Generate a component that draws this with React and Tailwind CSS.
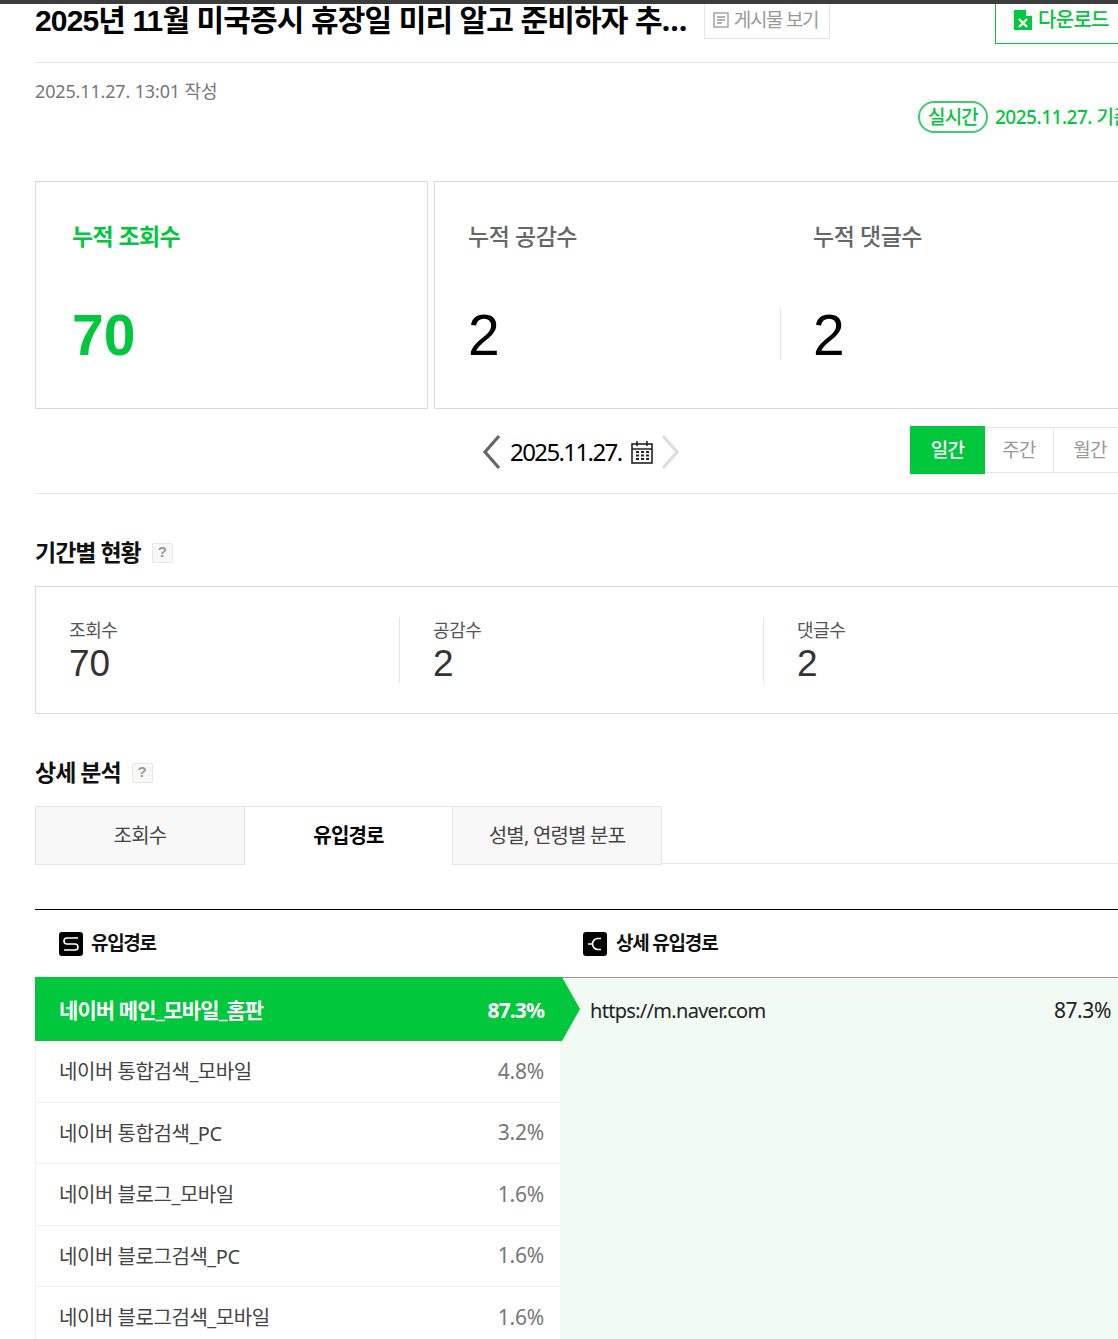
import React from "react";

const sans = "font-['Noto_Sans','Noto_Sans_CJK_KR',sans-serif]";
const arial = "font-['Liberation_Sans','Noto_Sans_CJK_KR',sans-serif]";

const sources = [
  ["네이버 통합검색_모바일", "4.8%"],
  ["네이버 통합검색_PC", "3.2%"],
  ["네이버 블로그_모바일", "1.6%"],
  ["네이버 블로그검색_PC", "1.6%"],
  ["네이버 블로그검색_모바일", "1.6%"],
];

function Help() {
  return (
    <span className={`mt-[1px] flex h-[20px] w-[21px] items-center justify-center rounded-[2px] border border-[#e6e6e6] bg-[#f8f8f8] text-[15px] font-bold text-[#999] ${arial}`}>?</span>
  );
}

function Stat({ label, value, first }) {
  return (
    <div className={`flex h-[66px] flex-col pl-[33px] ${first ? "w-[363px]" : "w-[364px] border-l border-[#e5e5e5]"}`}>
      <span className="text-[18px] leading-[26px] tracking-[-0.4px] text-[#555]">{label}</span>
      <span className={`text-[37px] leading-[42px] text-[#333] ${arial}`}>{value}</span>
    </div>
  );
}

export default function App() {
  return (
    <div className={`h-[1339px] w-[1118px] overflow-hidden bg-white ${sans}`}>
      <div className="relative z-20 h-[4px] bg-[#3d3d3d]" />
      <div className="w-[1200px] pl-[35px]">
        <div className="flex h-[59px] border-b border-[#e5e5e5]">
          <h1 className="mt-[-4px] h-[40px] w-[658px] truncate text-[30px] font-bold leading-[40px] tracking-[-0.87px] text-black">
            <span className={arial}>2025년 11월 미국증시 휴장일 미리 알고 준비하자 추수감사절</span>
          </h1>
          <button className="ml-[11px] mt-[-4px] flex h-[39px] w-[126px] items-center justify-center gap-[5px] border border-[#e5e5e5] pr-[3px] pt-[1px] text-[19px] tracking-[-1.3px] text-[#999]">
            <svg width="16" height="16" viewBox="0 0 16 16" fill="none" stroke="#999" strokeWidth="1.3">
              <rect x="1" y="1" width="14" height="14" />
              <path d="M4 5h8M4 8h8M4 11h5" />
            </svg>
            게시물 보기
          </button>
          <div className="ml-[165px] mt-[-4px] flex h-[44px] w-[200px] items-start gap-[6px] border-b border-l border-b-[#00c73c] border-l-[#00c73c] pl-[18px] pt-[6px] text-[20px] font-medium leading-[28px] tracking-[-0.7px] text-[#00c73c]">
            <svg className="mt-[4px]" width="18" height="20" viewBox="0 0 18 20">
              <path d="M0 0h12l6 6v14H0z" fill="#00c73c" />
              <path d="M12 0l6 6h-6z" fill="#fff" />
              <path d="M5 9l8 8M13 9l-8 8" stroke="#fff" strokeWidth="2.4" />
            </svg>
            <span>다운로드</span>
          </div>
        </div>

        <div className="flex h-[118px] items-start justify-between">
          <p className="mt-[15px] text-[18px] leading-[27px] tracking-[-0.15px] text-[#777]">2025.11.27. 13:01 작성</p>
          <div className="mt-[38px] flex w-[282px] items-center gap-[7px] text-[#00c73c]">
            <span className="flex h-[32px] w-[70px] items-center justify-center rounded-full border-2 border-[#3dcb74] text-[19px] font-medium tracking-[-0.8px]">실시간</span>
            <span className="whitespace-nowrap text-[19px] font-medium tracking-[-0.5px]">2025.11.27. 기준</span>
          </div>
        </div>

        <div className="flex gap-[6px]">
          <div className="h-[228px] w-[393px] border border-[#d9d9d9] pl-[36px] pt-[37px]">
            <p className="text-[23px] font-bold leading-[34px] tracking-[-0.6px] text-[#00c73c]">누적 조회수</p>
            <p className={`mt-[49px] text-[57px] font-bold leading-[66px] text-[#00c73c] ${arial}`}>70</p>
          </div>
          <div className="flex h-[228px] w-[760px] border border-[#d9d9d9] pt-[37px]">
            <div className="w-[345px] pl-[33px]">
              <p className="text-[23px] font-medium leading-[34px] tracking-[-0.45px] text-[#666]">누적 공감수</p>
              <p className={`mt-[49px] text-[57px] leading-[66px] text-black ${arial}`}>2</p>
            </div>
            <div className="relative pl-[33px]">
              <span className="absolute left-0 top-[89px] h-[52px] w-px bg-[#e5e5e5]" />
              <p className="text-[23px] font-medium leading-[34px] tracking-[-0.45px] text-[#666]">누적 댓글수</p>
              <p className={`mt-[49px] text-[57px] leading-[66px] text-black ${arial}`}>2</p>
            </div>
          </div>
        </div>

        <div className="relative flex h-[85px] items-start border-b border-[#e5e5e5]">
          <div className="ml-[446px] mt-[25px] flex items-center">
            <svg width="22" height="36" viewBox="0 0 22 36" fill="none" stroke="#666" strokeWidth="3.2"><path d="M18 2L4 18l14 16" /></svg>
            <span className="ml-[7px] text-[24px] tracking-[-1.6px] text-black">2025.11.27.</span>
            <svg className="ml-[9px]" width="22" height="24" viewBox="0 0 22 24" fill="none" stroke="#222" strokeWidth="1.6">
              <rect x="1" y="4" width="20" height="19" />
              <path d="M1 9h20M6 1v5M16 1v5" />
              <path d="M5 12h3M10 12h3M15 12h3M5 15.500h3M10 15.500h3M15 15.500h3M5 19h3M10 19h3M15 19h3" strokeWidth="2" />
            </svg>
            <svg className="ml-[6px]" width="22" height="36" viewBox="0 0 22 36" fill="none" stroke="#ddd" strokeWidth="3.2"><path d="M4 2l14 16L4 34" /></svg>
          </div>
          <div className="absolute left-[875px] top-[17px] flex text-[19px] tracking-[-0.8px]">
            <span className="flex h-[48px] w-[75px] items-center justify-center bg-[#00c73c] font-medium text-white">일간</span>
            <span className="mt-px flex h-[46px] w-[69px] items-center justify-center border-y border-r border-[#e5e5e5] text-[#999]">주간</span>
            <span className="mt-px flex h-[46px] w-[73px] items-center justify-center border-y border-r border-[#e5e5e5] text-[#999]">월간</span>
          </div>
        </div>

        <div className="mt-[41px] flex h-[34px] items-center gap-[11px]">
          <h2 className="text-[23px] font-semibold tracking-[-1px] text-[#111]">기간별 현황</h2>
          <Help />
        </div>
        <div className="mt-[17px] flex h-[128px] w-[1100px] border border-[#d9d9d9] pt-[30px]">
          <Stat first label="조회수" value="70" />
          <Stat label="공감수" value="2" />
          <Stat label="댓글수" value="2" />
        </div>

        <div className="mt-[41px] flex h-[34px] items-center gap-[11px]">
          <h2 className="text-[23px] font-semibold tracking-[-1px] text-[#111]">상세 분석</h2>
          <Help />
        </div>
        <div className="mt-[17px] flex h-[58px] border-b border-[#e5e5e5] text-[20px] tracking-[-0.8px]">
          <span className="flex h-[59px] w-[210px] items-center justify-center border border-[#e5e5e5] bg-[#f8f8f8] text-[#444]">조회수</span>
          <span className="flex h-[58px] w-[207px] items-center justify-center border-t border-[#e5e5e5] bg-white font-bold text-black">유입경로</span>
          <span className="flex h-[59px] w-[210px] items-center justify-center border border-[#e5e5e5] bg-[#f8f8f8] text-[#444]">성별, 연령별 분포</span>
        </div>

        <div className="mt-[45px] border-t border-black">
          <div className="flex h-[67px]">
            <div className="flex w-[548px] items-center gap-[8px] pl-[24px]">
              <span className="flex h-[24px] w-[24px] items-center justify-center rounded-[3px] bg-black">
                <svg width="16" height="14" viewBox="0 0 16 14" fill="none" stroke="#fff" strokeWidth="1.6">
                  <path d="M15 1H4a3 3 0 0 0 0 6h8a3 3 0 0 1 0 6H1" />
                </svg>
              </span>
              <span className="text-[19px] font-semibold tracking-[-1.3px] text-[#111]">유입경로</span>
            </div>
            <div className="flex items-center gap-[9px]">
              <span className="flex h-[24px] w-[24px] items-center justify-center rounded-[3px] bg-black">
                <svg width="16" height="16" viewBox="0 0 16 16" fill="none" stroke="#fff" strokeWidth="1.6">
                  <path d="M14 2.500H11a5.500 5.500 0 0 0 0 11h3M1 8h4" />
                </svg>
              </span>
              <span className="text-[19px] font-semibold tracking-[-1.2px] text-[#111]">상세 유입경로</span>
            </div>
          </div>

          <div className="flex">
            <div className="w-[525px]">
              <div className="relative z-10 flex h-[64px] w-[545px] items-center justify-between bg-[#00c73c] pl-[24px] pr-[36px] pt-[4px] text-[21px] font-bold tracking-[-0.9px] text-white [clip-path:polygon(0_0,527px_0,545px_50%,527px_100%,0_100%)]">
                <span>네이버 메인_모바일_홈판</span>
                <span>87.3%</span>
              </div>
              {sources.map(([name, pct]) => (
                <div key={name} className="flex h-[61.500px] items-center justify-between border-b border-l border-[#f0f0f0] pl-[23px] pr-[16px] text-[20px] tracking-[-0.45px] text-[#444]">
                  <span className="pt-[2px]">{name}</span>
                  <span className="text-[21px] tracking-[-0.2px] text-[#777]">{pct}</span>
                </div>
              ))}
            </div>
            <div className="h-[400px] flex-1 border-t border-[#999] bg-[#f1fbf3]">
              <div className="flex h-[62px] w-[551px] items-center justify-between pl-[30px] pt-[4px] text-[20px] tracking-[-0.7px] text-[#222]">
                <span>https://m.naver.com</span>
                <span className="text-[21px] tracking-[-0.4px]">87.3%</span>
              </div>
            </div>
          </div>
        </div>
      </div>
    </div>
  );
}
